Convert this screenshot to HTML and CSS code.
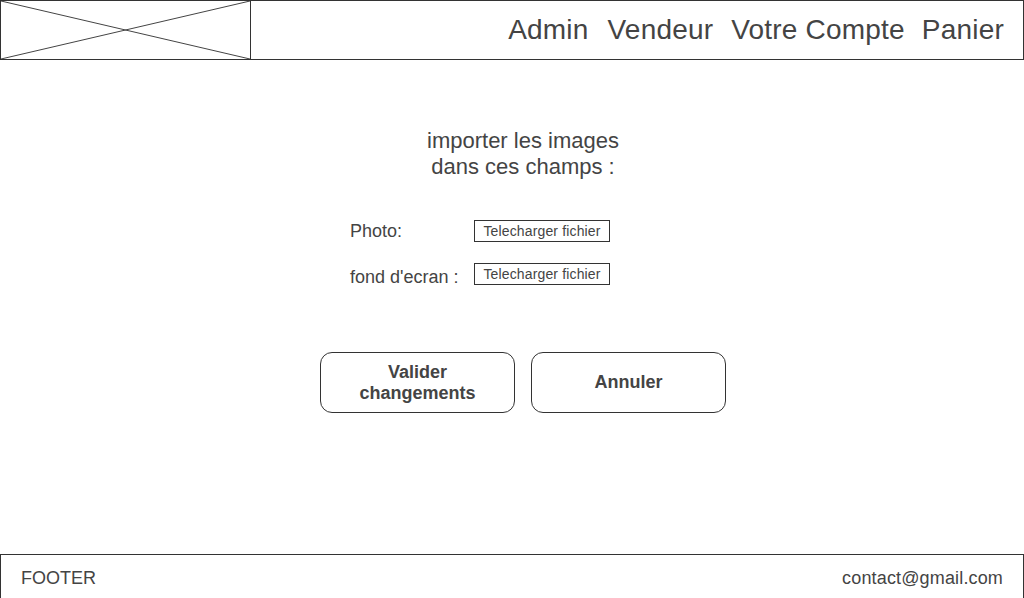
FILE: index.html
```html
<!DOCTYPE html>
<html lang="fr">
<head>
<meta charset="utf-8">
<title>Importer les images</title>
<link rel="stylesheet" href="styles.css">
</head>
<body>
<div class="page">
  <header class="header">
    <div class="logo">
      <svg class="logo-x" viewBox="0 0 249 58" preserveAspectRatio="none" width="249" height="58">
        <line x1="0" y1="0" x2="249" y2="58" stroke="#444" stroke-width="1"/>
        <line x1="0" y1="58" x2="249" y2="0" stroke="#444" stroke-width="1"/>
      </svg>
    </div>
    <nav class="nav">
      <a class="nav-item nav-admin">Admin</a>
      <a class="nav-item nav-vendeur">Vendeur</a>
      <a class="nav-item">Votre Compte</a>
      <a class="nav-item">Panier</a>
    </nav>
  </header>
  <main class="main">
    <div class="panel">
      <h1 class="title">importer les images<br>dans ces champs :</h1>
      <div class="form">
        <div class="row">
          <span class="label">Photo:</span>
          <span class="file-btn">Telecharger fichier</span>
        </div>
        <div class="row row-second">
          <span class="label label-low">fond d'ecran :</span>
          <span class="file-btn">Telecharger fichier</span>
        </div>
      </div>
      <div class="actions">
        <button class="btn">Valider<br>changements</button>
        <button class="btn">Annuler</button>
      </div>
    </div>
  </main>
  <footer class="footer">
    <span>FOOTER</span>
    <span class="contact">contact@gmail.com</span>
  </footer>
</div>
</body>
</html>
```
FILE: styles.css
```css
* { box-sizing: border-box; }
html, body { margin: 0; padding: 0; background: #fff; }
body {
  font-family: "Liberation Sans", Arial, sans-serif;
  color: #444;
}
.page { width: 1024px; display: flex; flex-direction: column; }

.header {
  height: 60px;
  border: 1px solid #333;
  display: flex;
  align-items: stretch;
}
.logo {
  width: 250px;
  border-right: 1px solid #333;
  display: flex;
}
.logo-x { display: block; width: 249px; height: 58px; }
.nav {
  flex: 1;
  display: flex;
  justify-content: flex-end;
  align-items: center;
  gap: 17px;
  padding-right: 19px;
}
.nav-item {
  font-size: 28px;
  line-height: 32px;
  color: #444;
  text-decoration: none;
  letter-spacing: 0.2px;
}
.nav-admin { margin-right: 2px; }
.nav-vendeur { margin-right: 1px; }

.main {
  height: 494px;
  display: flex;
  justify-content: center;
  padding-left: 22px;
  padding-top: 68px;
}
.panel { width: 406px; display: flex; flex-direction: column; }
.title {
  margin: 0;
  font-weight: normal;
  font-size: 22px;
  line-height: 26px;
  text-align: center;
}
.form {
  margin-top: 40px;
  padding-left: 30px;
  display: flex;
  flex-direction: column;
  gap: 21px;
}
.row { display: flex; align-items: center; height: 22px; }
.label { width: 124px; font-size: 18px; line-height: 22px; }
.label-low { padding-top: 6px; }
.file-btn {
  width: 136px;
  height: 22px;
  border: 1px solid #333;
  font-size: 14px;
  line-height: 20px;
  letter-spacing: 0.15px;
  text-align: center;
}
.actions {
  margin-top: 67px;
  display: flex;
  gap: 16px;
}
.btn {
  width: 195px;
  height: 61px;
  border: 1px solid #333;
  border-radius: 12px;
  background: #fff;
  font-family: "Liberation Sans", Arial, sans-serif;
  font-weight: bold;
  font-size: 18px;
  line-height: 21px;
  color: #444;
  padding: 0;
}

.footer {
  height: 48px;
  border: 1px solid #333;
  display: flex;
  justify-content: space-between;
  align-items: center;
  padding: 0 20px;
  font-size: 18px;
}
.contact { letter-spacing: 0.15px; }
```
